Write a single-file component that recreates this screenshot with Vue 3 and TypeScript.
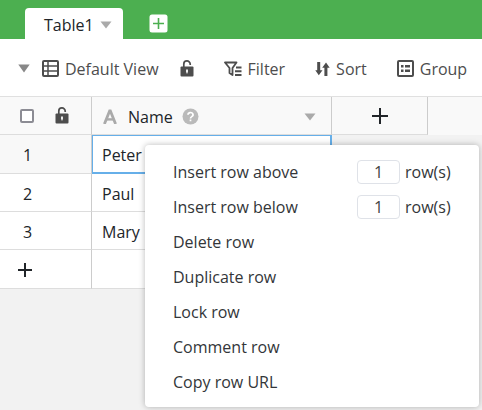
<script setup lang="ts">
import { ref } from 'vue'

interface InsertAction {
  id: string
  label: string
  count: string
}

const people = ref<string[]>(['Peter', 'Paul', 'Mary'])
const selectedRow = ref(0)
const allChecked = ref(false)
const inserts = ref<InsertAction[]>([
  { id: 'above', label: 'Insert row above', count: '1' },
  { id: 'below', label: 'Insert row below', count: '1' },
])
const actions = ['Delete row', 'Duplicate row', 'Lock row', 'Comment row', 'Copy row URL']
</script>

<template>
  <div class="app">
    <header class="tabs">
      <button class="tab" type="button">
        Table1
        <svg class="caret" width="12" height="8" viewBox="0 0 12 8"><path d="M0.5 0.5h11L6 7.5z" /></svg>
      </button>
      <button class="add-table" type="button" aria-label="Add table">
        <svg width="19" height="19" viewBox="0 0 19 19">
          <rect x="0.5" y="0.5" width="18" height="18" rx="2.5" fill="#fff" />
          <path d="M9.5 4v11M4 9.5h11" stroke="#4caf50" stroke-width="1.6" />
        </svg>
      </button>
    </header>

    <nav class="toolbar">
      <button class="tool view" type="button">
        <svg class="view-caret" width="12" height="9" viewBox="0 0 12 9"><path d="M0.3 0.5h11.4L6 8.5z" /></svg>
        <svg width="17" height="17" viewBox="0 0 17 17" fill="none" stroke="#4d4d4d">
          <rect x="1" y="1" width="15" height="15" rx="1" stroke-width="2" />
          <path d="M1 6h15M1 11h15M6 1v15" stroke-width="1.5" />
        </svg>
        <span>Default View</span>
      </button>
      <button class="tool lock" type="button" aria-label="Lock view">
        <svg width="14" height="17" viewBox="0 0 14 17">
          <path d="M3.8 7V4.2a3.2 3.2 0 0 1 6.4-.2v1" fill="none" stroke="#4d4d4d" stroke-width="1.7" />
          <rect x="0.5" y="6.5" width="13" height="10" rx="1" fill="#4d4d4d" />
          <path d="M6.1 9.5h1.8v2l-.5 2h-.8l-.5-2z" fill="#fff" />
        </svg>
      </button>
      <button class="tool filter" type="button">
        <svg width="18" height="16" viewBox="0 0 18 16" fill="none" stroke="#4d4d4d">
          <path d="M1 1.5h11.5L8.5 7v7L5.5 12V7z" stroke-width="1.8" stroke-linejoin="round" />
          <path d="M12 6.5h5.5M11 10.2h6.5M11 14h6.5" stroke-width="2" />
        </svg>
        <span>Filter</span>
      </button>
      <button class="tool sort" type="button">
        <svg width="15" height="16" viewBox="0 0 15 16">
          <path d="M2.2 1h3v8.3h2.3L3.8 14.3 0.3 9.3h1.9z" fill="#4d4d4d" />
          <path d="M9.4 15V6.7H7.2L11 1.5l3.7 5.2h-2.3V15z" fill="#4d4d4d" />
        </svg>
        <span>Sort</span>
      </button>
      <button class="tool group" type="button">
        <svg width="17" height="17" viewBox="0 0 17 17" fill="none" stroke="#4d4d4d" stroke-width="2">
          <rect x="1" y="1" width="15" height="15" rx="1" />
          <path d="M4 6.2h2.5M4 10.8h2.5M8 6.2h5M8 10.8h5" stroke-width="2.4" />
        </svg>
        <span>Group</span>
      </button>
    </nav>

    <main class="sheet">
      <table class="grid">
        <colgroup>
          <col class="col-index" />
          <col class="col-name" />
          <col class="col-add" />
          <col />
        </colgroup>
        <thead>
          <tr>
            <th>
              <div class="index-head">
                <input v-model="allChecked" class="check" type="checkbox" aria-label="Select all rows" />
                <svg width="14" height="17" viewBox="0 0 14 17">
                  <path d="M3.8 7V4.2a3.2 3.2 0 0 1 6.4-.2v1" fill="none" stroke="#4d4d4d" stroke-width="1.7" />
                  <rect x="0.5" y="6.5" width="13" height="10" rx="1" fill="#4d4d4d" />
                  <path d="M6.1 9.5h1.8v2l-.5 2h-.8l-.5-2z" fill="#fff" />
                </svg>
              </div>
            </th>
            <th>
              <div class="name-head">
                <svg width="14" height="15" viewBox="0 0 14 15" fill="none" stroke="#aaa">
                  <path d="M1.4 15L7 1l5.6 14" stroke-width="2.8" stroke-linejoin="bevel" />
                  <path d="M3 10.4h8" stroke-width="2.4" />
                </svg>
                <span>Name</span>
                <svg class="help" width="17" height="17" viewBox="0 0 17 17" fill="none">
                  <circle cx="8.5" cy="8.5" r="8" fill="#bababa" />
                  <path d="M6 6.8a2.5 2.2 0 1 1 3.8 1.8q-1.3.8-1.3 1.9M8.5 11.6v1.7" stroke="#fff" stroke-width="1.7" />
                </svg>
                <svg class="caret name-caret" width="12" height="8" viewBox="0 0 12 8"><path d="M0.5 0.5h11L6 7.5z" /></svg>
              </div>
            </th>
            <th>
              <button class="plus add-column" type="button" aria-label="Add column">
                <svg width="16" height="16" viewBox="0 0 16 16"><path d="M8 0v16M0 8h16" /></svg>
              </button>
            </th>
            <th class="rest"></th>
          </tr>
        </thead>
        <tbody>
          <tr v-for="(name, i) in people" :key="name" :class="{ selected: i === selectedRow }">
            <td class="number">{{ i + 1 }}</td>
            <td class="name">{{ name }}</td>
          </tr>
          <tr class="append">
            <td>
              <button class="plus add-row" type="button" aria-label="Add row">
                <svg width="14" height="14" viewBox="0 0 14 14"><path d="M7 0v14M0 7h14" /></svg>
              </button>
            </td>
            <td></td>
          </tr>
        </tbody>
      </table>
    </main>

    <div class="menu">
      <div v-for="item in inserts" :key="item.id" class="menu-row">
        <button class="action" type="button">{{ item.label }}</button>
        <input :id="`count-${item.id}`" v-model="item.count" class="count" type="text" />
        <label :for="`count-${item.id}`">row(s)</label>
      </div>
      <div v-for="label in actions" :key="label" class="menu-row">
        <button class="action" type="button">{{ label }}</button>
      </div>
    </div>
  </div>
</template>

<style>
body {
  margin: 0;
}
</style>

<style scoped>
.app {
  position: relative;
  min-height: 100vh;
  overflow: hidden;
  background: #f2f2f2;
  color: #212529;
  font: 16px/24px "Open Sans", "Noto Sans", sans-serif;
}

.app * {
  box-sizing: border-box;
}

svg {
  display: block;
  flex: none;
}

button {
  padding: 0;
  border: 0;
  background: none;
  color: inherit;
  font: inherit;
  white-space: nowrap;
}

.tabs {
  display: flex;
  height: 39px;
  padding: 8px 0 0 25px;
  background: #4caf50;
}

.tab {
  display: flex;
  align-items: center;
  justify-content: space-between;
  width: 98px;
  padding: 2px 11px 0 19px;
  border-radius: 4px 4px 0 0;
  background: #fff;
}

.caret {
  fill: #aaa;
}

.add-table {
  align-self: center;
  margin-left: 26px;
}

.toolbar {
  display: flex;
  align-items: center;
  height: 57px;
  padding: 2px 0 0 18px;
  background: #fff;
  color: #4d4d4d;
}

.tool {
  display: flex;
  align-items: center;
  gap: 6px;
}

.view-caret {
  margin-right: 6px;
  fill: #888;
}

.lock {
  margin-left: 21px;
}

.filter {
  margin-left: 30px;
}

.sort {
  margin-left: 30px;
}

.group {
  margin-left: 30px;
}

.grid {
  width: 100%;
  table-layout: fixed;
  border-spacing: 0;
  border-top: 1px solid #e0e0e0;
}

.col-index {
  width: 92px;
}

.col-name {
  width: 240px;
}

.col-add {
  width: 96px;
}

th,
td {
  height: 38px;
  padding: 0;
  border-right: 1px solid #ccc;
  border-bottom: 1px solid #ddd;
  text-align: left;
  font-weight: 400;
}

th {
  background: #f9f9f9;
}

.rest {
  border: 0;
}

td {
  background: #fff;
}

tbody td {
  padding-top: 2px;
}

.selected td,
.append td {
  height: 39px;
}

.index-head {
  display: flex;
  align-items: center;
  gap: 21px;
  padding-left: 20px;
}

.check {
  appearance: none;
  width: 14px;
  height: 14px;
  margin: 0;
  border: 2px solid #8c8c94;
  border-radius: 2px;
  background: #fff;
}

.name-head {
  display: flex;
  align-items: center;
  gap: 11px;
  padding: 2px 15px 0 11px;
}

.help {
  margin-left: -2px;
}

.name-caret {
  margin-left: auto;
}

.plus {
  display: flex;
  stroke: #212529;
  stroke-width: 2;
}

.add-column {
  margin: 0 auto;
}

.add-row {
  margin-left: 18px;
}

tbody .number {
  padding-left: 23px;
}

.name {
  padding-left: 10px;
}

.selected .number {
  background: #f8f8f8;
}

.selected .name {
  padding-left: 9px;
  border: 1px solid #66afe9;
  border-bottom-width: 2px;
  border-right-width: 2px;
}

.menu {
  position: absolute;
  top: 145px;
  left: 145px;
  width: 334px;
  padding: 9px 0 8px 28px;
  border-radius: 4px;
  background: #fff;
  color: #333639;
  box-shadow: 0 0 6px rgba(0, 0, 0, 0.28);
}

.menu-row {
  display: flex;
  align-items: center;
  height: 35px;
}

.action {
  flex: 1;
  text-align: left;
}

.count {
  width: 43px;
  height: 24px;
  margin-right: 5px;
  padding: 0;
  border: 1px solid #dfe2e8;
  border-radius: 4px;
  background: #fff;
  color: #444;
  font: inherit;
  text-align: center;
}

label {
  width: 74px;
}
</style>
